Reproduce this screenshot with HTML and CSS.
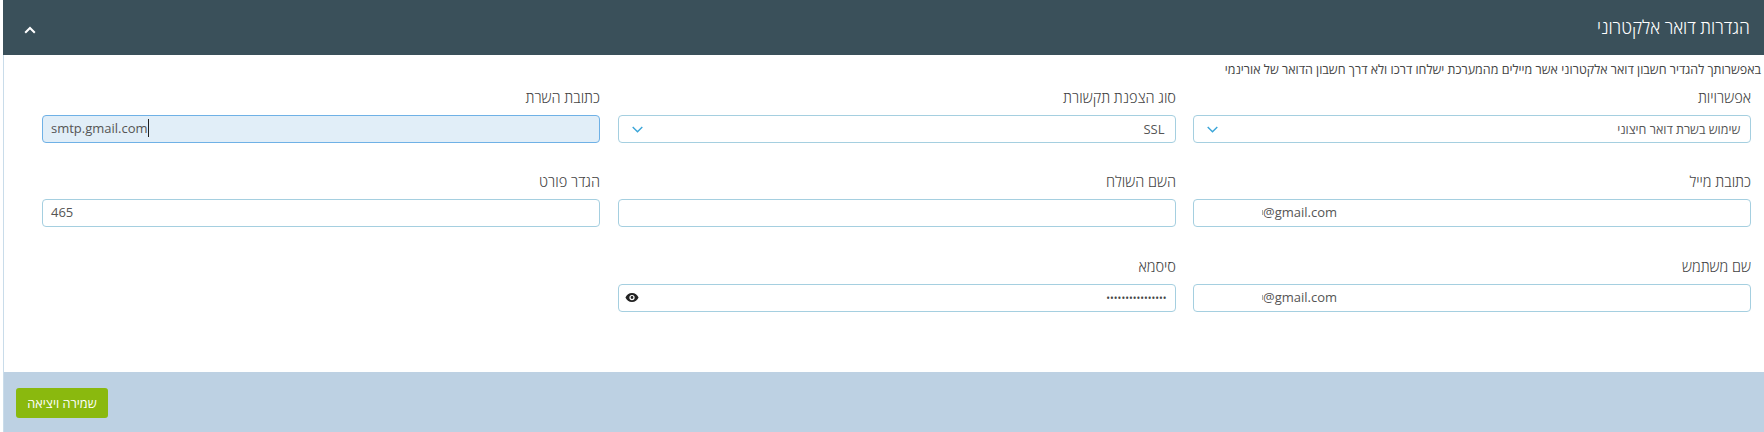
FILE: index.html
```html
<!DOCTYPE html>
<html lang="he" dir="rtl">
<head>
<meta charset="utf-8">
<title>הגדרות דואר אלקטרוני</title>
<link rel="stylesheet" href="styles.css">
</head>
<body>
<section class="panel">
  <header class="panel-head">
    <h1 class="panel-title">הגדרות דואר אלקטרוני</h1>
    <svg class="collapse" viewBox="0 0 12 8" width="12" height="8" aria-hidden="true"><path d="M1.200 6.800 6 2l4.800 4.800" fill="none" stroke="#fff" stroke-width="2"/></svg>
  </header>
  <div class="panel-body">
    <p class="intro">באפשרותך להגדיר חשבון דואר אלקטרוני אשר מיילים מהמערכת ישלחו דרכו ולא דרך חשבון הדואר של אורינמי</p>
    <div class="grid">
      <div class="field">
        <label class="label">אפשרויות</label>
        <div class="control select"><span class="he">שימוש בשרת דואר חיצוני</span><svg class="chev" viewBox="0 0 11 7" width="11" height="7"><path d="M.7 1l4.800 4.800L10.300 1" fill="none" stroke="#3aa5d8" stroke-width="1.400"/></svg></div>
      </div>
      <div class="field">
        <label class="label">סוג הצפנת תקשורת</label>
        <div class="control select"><span>SSL</span><svg class="chev" viewBox="0 0 11 7" width="11" height="7"><path d="M.7 1l4.800 4.800L10.300 1" fill="none" stroke="#3aa5d8" stroke-width="1.400"/></svg></div>
      </div>
      <div class="field">
        <label class="label">כתובת השרת</label>
        <div class="control focused ltr"><span class="caret">smtp.gmail.com</span></div>
      </div>
      <div class="field">
        <label class="label">כתובת מייל</label>
        <div class="control ltr redacted"><i class="sliver"></i><span>@gmail.com</span></div>
      </div>
      <div class="field">
        <label class="label">השם השולח</label>
        <div class="control"></div>
      </div>
      <div class="field">
        <label class="label">הגדר פורט</label>
        <div class="control ltr"><span>465</span></div>
      </div>
      <div class="field">
        <label class="label">שם משתמש</label>
        <div class="control ltr redacted"><i class="sliver"></i><span>@gmail.com</span></div>
      </div>
      <div class="field">
        <label class="label">סיסמא</label>
        <div class="control password"><span class="dots">••••••••••••••••</span><svg class="eye" viewBox="0 0 16 12" width="14" height="11"><path fill-rule="evenodd" fill="#222" d="M8 .8C4.600.8 1.700 2.900.5 6c1.200 3.100 4.100 5.200 7.500 5.200s6.300-2.100 7.500-5.200C14.300 2.900 11.400.8 8 .8zm0 8.200a3 3 0 1 1 0-6 3 3 0 0 1 0 6zm0-4.600a1.600 1.600 0 1 0 0 3.200 1.600 1.600 0 0 0 0-3.200z"/></svg></div>
      </div>
    </div>
  </div>
  <footer class="panel-foot">
    <button class="save" type="button">שמירה ויציאה</button>
  </footer>
</section>
</body>
</html>
```
FILE: styles.css
```css
* { box-sizing: border-box; }
html, body { margin: 0; height: 100%; background: #fff; }
body { font-family: "Open Sans", "Noto Sans", sans-serif; color: #555; overflow: hidden; }
.panel { margin-left: 3px; height: 432px; display: flex; flex-direction: column; border-left: 1px solid #c9dcea; }
.panel-head { height: 55px; margin-left: -1px; background: #3a505a; display: flex; align-items: center; justify-content: space-between; padding: 0 14px 0 21px; }
.panel-title { margin: -2px 0 0; font-size: 19px; font-weight: 300; color: #fff; transform: scaleX(.916); transform-origin: right center; }
.collapse { display: block; margin-top: 5px; }
.panel-body { flex: 1; padding: 5px 3px 0 0; }
.intro { margin: -1px 0 9px; font-size: 13px; line-height: 20px; color: #444; transform: scaleX(.96); transform-origin: right center; }
.grid { display: grid; grid-template-columns: repeat(3, 558px); column-gap: 17.500px; row-gap: 29.400px; padding-right: 10px; }
.label { display: block; font-size: 15px; font-weight: 300; line-height: 20px; height: 27px; margin-top: -1px; margin-bottom: 1px; color: #444; transform: scaleX(.97); transform-origin: right center; }
.control { height: 28px; border: 1px solid #a5cfe0; border-radius: 4px; background: #fff; display: flex; align-items: center; padding: 0 8px; font-size: 13px; color: #555; }
.select { justify-content: space-between; padding: 0 10px 0 13px; }
.he { transform: scaleX(.96); transform-origin: right center; }
.password { justify-content: space-between; padding: 0 8px 0 6px; }
.ltr { direction: ltr; padding-bottom: 2px; }
.focused { background: #e1eef8; border-color: #6fb1e6; }
.caret { border-right: 1px solid #222; line-height: 18px; }
.redacted { padding-left: 68px; }
.sliver { width: 1px; height: 5px; background: #aaa; margin-top: 1px; }
.dots { color: #444; font-size: 10px; }
.chev, .eye { display: block; }
.panel-foot { height: 60px; background: #bdd1e3; padding: 16px 12px 0; display: flex; justify-content: flex-end; }
.save { width: 92px; height: 30px; border: 0; border-radius: 3px; background: #8ab90e; color: #fff; font: 400 12.700px "Open Sans", "Noto Sans", sans-serif; padding: 0; }
```
